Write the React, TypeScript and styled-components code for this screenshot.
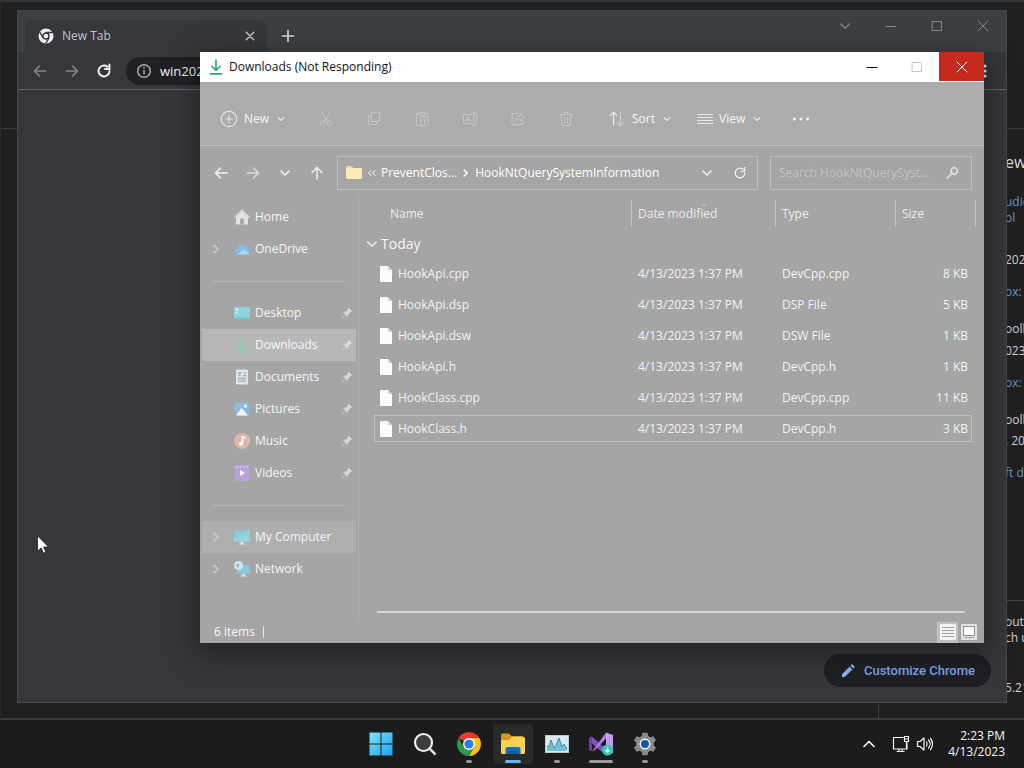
import React from "react";
import styled, { createGlobalStyle } from "styled-components";

const GlobalStyle = createGlobalStyle`
  * { box-sizing: border-box; }
  html, body { margin: 0; padding: 0; }
  body { background: #1f1f1f; font: 12px/16px "Open Sans", "Noto Sans", sans-serif; color: #f6f6f6; }
  button { background: none; border: 0; padding: 0; margin: 0; color: inherit; font: inherit; }
  input { font: inherit; color: inherit; background: none; border: 0; padding: 0; outline: none; min-width: 0; }
  a { color: inherit; text-decoration: none; }
  svg { display: block; flex: none; }
`;

/* ---------- icons ---------- */

const Stroke = styled.svg<{ $w?: number }>`
  fill: none;
  stroke: currentColor;
  stroke-width: ${(p) => p.$w ?? 1};
  stroke-linecap: round;
  stroke-linejoin: round;
`;

type LineProps = { d: string; size?: number; box?: number; weight?: number };
const Line = ({ d, size = 16, box = 16, weight = 1 }: LineProps) => (
  <Stroke width={size} height={size} viewBox={`0 0 ${box} ${box}`} $w={weight} aria-hidden>
    <path d={d} />
  </Stroke>
);

const paths = {
  back: "M14 8H2.5M7.5 3 2.5 8l5 5",
  forward: "M2 8h11.5M8.500 3l5 5-5 5",
  up: "M8 14V2.500M3 7.500l5-5 5 5",
  down: "M4 6l4 4 4-4",
  right: "M6 4l4 4-4 4",
  close: "M3 3l10 10M13 3 3 13",
  plus: "M8 2.500v11M2.500 8h11",
  min: "M3 8.500h10",
  max: "M3.500 3.500h9v9h-9z",
  cut: "M4 1l5.500 9.500M12 1 6.500 10.500M4.500 10a2.200 2.200 0 1 0 .01 0M11.500 10a2.200 2.200 0 1 0 .01 0",
  copy: "M5.500 1.500h8v9h-8zM5.500 5h-3v8.500h8v-3",
  paste: "M5 2.500H2.500v12H6M11 2.500h2.500V5M5 1.500h6v2.500H5zM7 6h7v9H7zM9 9h3M10.500 9v4",
  rename: "M10 3.500H1.500v9H10M14 3.500h1v9h-1M12 1.500v13M10.500 1.500h3M10.500 14.500h3M3.500 10.500l2.200-5 2.200 5M4.200 9h3",
  share: "M8 2.500H2v11h11V10M10 2l4.500 4L10 10V7.800C7.500 7.800 6 9 5 11c0-4 2-6.500 5-6.700z",
  trash: "M1.500 3.500h13M6 3.500v-2h4v2M3 3.500l1 11h8l1-11M6.500 6.500v5.500M9.500 6.500v5.500",
  lines: "M0 3.500h16M0 6.500h16M0 9.500h16M0 12.500h16",
  refresh: "M13.500 8A5.500 5.500 0 1 1 11.500 3.700M13.500 1.500V6H9",
};

const DownloadIcon = ({ color }: { color: string }) => (
  <svg width="16" height="16" viewBox="0 0 16 16" fill="none" stroke={color} strokeWidth="1.700">
    <path d="M8 .5v10.500M3.500 7 8 11.300 12.500 7M2 14.800h12" />
  </svg>
);

const SortIcon = () => (
  <Stroke width="18" height="18" viewBox="0 0 16 16" $w={1.1} aria-hidden>
    <path d="M5 13.500V2M2 5l3-3 3 3" />
    <path d="M11 2.500V14M8 11l3 3 3-3" stroke="#c9dadc" />
  </Stroke>
);

const FolderIcon = () => (
  <svg width="18" height="16" viewBox="0 0 18 16">
    <path d="M1 2.500C1 1.700 1.500 1 2.300 1h4l2 2h7.500c.8 0 1.200.6 1.200 1.300V12H1z" fill="#ead9a4" />
    <rect x="1" y="3" width="16" height="11" rx="1.500" fill="#fdeab8" />
  </svg>
);

const FileIcon = () => (
  <svg width="12" height="16" viewBox="0 0 12 16">
    <path d="M0 0h8l4 4v12H0z" fill="#fbfbfb" />
    <path d="M8 0v4h4z" fill="#d2d2d2" />
  </svg>
);

const PinIcon = () => (
  <svg width="12" height="12" viewBox="0 0 12 12" fill="#d4d7da">
    <path d="M7.500.5 11.500 4.500 9.500 5 7.500 7.200 7 10 4.700 7.700 1 11.500.5 11 4.300 7.300 2 5l2.800-.5L7 2.500z" />
  </svg>
);

type PlaceKind = "home" | "cloud" | "desktop" | "download" | "document" | "picture" | "music" | "video" | "computer" | "network";

const PlaceIcon = ({ kind }: { kind: PlaceKind }) => (
  <svg width="16" height="16" viewBox="0 0 16 16" aria-hidden>
    {kind === "home" && (
      <>
        <path d="M2 7 8 1.500 14 7v8.500H2z" fill="#e2e2e4" />
        <path d="M0 8 8 0l8 8-1.200 1.200L8 3 1.200 9.200z" fill="#e5cfb4" />
        <path d="M6.200 9.500h3.600v6H6.200z" fill="#a5a5a5" />
      </>
    )}
    {kind === "cloud" && (
      <>
        <path d="M3.500 13.500a3.500 3.500 0 0 1-.3-6.800A4.600 4.600 0 0 1 11.700 6a3.900 3.900 0 0 1 .8 7.500z" fill="#84bbe8" />
        <path d="M3.500 13.500 9 8.500l6.500 3.500a3.500 3.500 0 0 1-3 1.500z" fill="#a9d6f3" />
      </>
    )}
    {kind === "desktop" && (
      <>
        <rect y="2" width="16" height="12" rx="1" fill="#8fd3df" />
        <path d="M2 4.500h2M2 7.500h1" stroke="#fff" strokeWidth="1.500" />
        <path d="M0 12h16v1a1 1 0 0 1-1 1H1a1 1 0 0 1-1-1z" fill="#7cc6d6" />
      </>
    )}
    {kind === "download" && (
      <path d="M8 1v10M3.500 7 8 11.200 12.500 7M2 14.500h12" fill="none" stroke="#7fd3ae" strokeWidth="1.800" />
    )}
    {kind === "document" && (
      <>
        <rect x="2" y=".5" width="12" height="15" rx="1" fill="#dfe5ea" />
        <path d="M4 4h4M4 6.500h3M10 4h2M9 6.500h3M4 9.500h8M4 12h8" stroke="#9fb2c2" strokeWidth="1.300" />
      </>
    )}
    {kind === "picture" && (
      <>
        <rect x="1" y="1.500" width="14" height="13" rx="1" fill="#88bce0" />
        <path d="M2 14.500 7.500 7l6.500 7.500z" fill="#f4f8fb" />
        <circle cx="11.500" cy="5" r="1.500" fill="#f4f8fb" />
      </>
    )}
    {kind === "music" && (
      <>
        <circle cx="8" cy="8" r="8" fill="#ddb7aa" />
        <path d="M8.500 3v7.500M8.500 3.500l3 1.500" stroke="#fff" strokeWidth="1.500" />
        <circle cx="7" cy="10.800" r="2" fill="#fff" />
      </>
    )}
    {kind === "video" && (
      <>
        <rect x="1" width="14" height="16" rx="1" fill="#b9a2da" />
        <path d="M2 2h12" stroke="#d8caeb" strokeWidth="1.500" strokeDasharray="2 1.500" />
        <path d="M6 5l5 3-5 3z" fill="#fff" />
      </>
    )}
    {kind === "computer" && (
      <>
        <rect y="1.500" width="16" height="11" rx="1" fill="#85cdd0" />
        <path d="M0 10 14 1.500h1a1 1 0 0 1 1 1v9a1 1 0 0 1-1 1H1a1 1 0 0 1-1-1z" fill="#92d4d9" />
        <path d="M7 12.500h2v2h2v1H5v-1h2z" fill="#dce9ec" />
      </>
    )}
    {kind === "network" && (
      <>
        <rect x="3" y="4" width="13" height="8.500" rx="1" fill="#8bc8e0" />
        <circle cx="4.500" cy="4.500" r="4.500" fill="#d3e6ec" />
        <path d="M1.500 3.500 4 2.500l1.500 2L4 7z" fill="#8bbdcc" />
        <path d="M8.500 12.500h2v2h2v1h-6v-1h2z" fill="#dce9ec" />
      </>
    )}
  </svg>
);

/* ---------- desktop ---------- */

const Desktop = styled.div`
  position: relative;
  display: flex;
  flex-direction: column;
  height: 100vh;
  min-height: 700px;
  overflow: hidden;
`;

const EditorWindow = styled.div`
  flex: 1;
  min-height: 0;
  display: flex;
  flex-direction: column;
  background: #202021;
  border-top: 2px solid #353535;
  border-bottom: 2px solid #3a3a3f;
  border-left: 1px solid #2b2b2b;
`;

const EditorHeader = styled.div`
  height: 127px;
  flex: none;
  border-bottom: 1px solid #3b3b3b;
  margin-left: 1px;
`;

const EditorBody = styled.div`
  flex: 1;
  min-height: 0;
  display: flex;
  justify-content: flex-end;
`;

const NewsPanel = styled.aside`
  width: 146px;
  border-left: 1px solid #3d3d3d;
  padding-left: 126px;
  overflow: hidden;
  white-space: nowrap;
  display: flex;
  flex-direction: column;
`;

const NewsTitle = styled.h2`
  margin: 21px 0 20px;
  font-size: 16px;
  line-height: 24px;
  font-weight: 400;
  color: #dcdcdc;
`;

const NewsLink = styled.a`
  display: block;
  color: #649ac2;
`;

const NewsItem = styled.div<{ $before: number }>`
  margin-top: ${(p) => p.$before}px;
`;

const NewsText = styled.div`
  color: #d0d0d0;
`;

const NewsFooter = styled.div`
  margin: 119px 0 0 -126px;
  padding: 13px 0 0 126px;
  border-top: 1px solid #444;
`;

/* ---------- browser window ---------- */

const BrowserWindow = styled.section`
  position: absolute;
  inset: 10px 17px 65px 17px;
  display: flex;
  flex-direction: column;
  background: #36373b;
  border: 1px solid #46484b;
  border-top-color: #404346;
`;

const TabStrip = styled.div`
  display: flex;
  height: 41px;
  padding-left: 7px;
  background: #3c4043;
`;

const Tab = styled.div`
  display: flex;
  align-items: center;
  width: 242px;
  height: 32px;
  margin-top: 9px;
  padding: 0 11px 0 13px;
  gap: 8px;
  border-radius: 8px 8px 0 0;
  background: #36373b;
  color: #c3c5c7;
`;

const TabLabel = styled.span`
  flex: 1;
`;

const NewTabButton = styled.button`
  margin: 9px 0 0 13px;
  color: #d4d6d8;
`;

const CaptionButtons = styled.div<{ $tone: string; $w: number }>`
  display: grid;
  grid-auto-flow: column;
  grid-auto-columns: ${(p) => p.$w}px;
  margin-left: auto;
  color: ${(p) => p.$tone};
`;

const CaptionButton = styled.button<{ $danger?: boolean; $faint?: boolean }>`
  display: grid;
  place-items: center;
  height: 29px;
  background: ${(p) => (p.$danger ? "#c42b1c" : "transparent")};
  color: ${(p) => (p.$danger ? "#fff" : p.$faint ? "#c4c4c4" : "inherit")};
`;

const BrowserToolbar = styled.div`
  display: flex;
  align-items: center;
  height: 38px;
  padding: 0 19px 0 14px;
  gap: 16px;
  border-bottom: 1px solid #626467;
`;

const ToolButton = styled.button<{ $dim?: boolean }>`
  color: ${(p) => (p.$dim ? "#85878a" : "#f2f3f4")};
`;

const Omnibox = styled.label`
  display: flex;
  align-items: center;
  flex: 1;
  height: 28px;
  margin: 0 20px 0 -2px;
  padding: 0 10px;
  gap: 8px;
  border-radius: 14px;
  background: #202124;
  color: #a6a8ab;
  input { flex: 1; color: #f1f2f3; font-size: 13px; }
`;

const BrowserPage = styled.div`
  flex: 1;
  min-height: 0;
  display: flex;
  justify-content: flex-end;
  align-items: flex-end;
  padding: 15px;
`;

const CustomizeButton = styled.button`
  display: flex;
  align-items: center;
  gap: 8px;
  height: 33px;
  padding: 0 16px;
  border-radius: 17px;
  background: #1e2023;
  color: #7ea3ea;
  font: 500 13px/16px Roboto, sans-serif;
`;

/* ---------- file explorer window ---------- */

const ExplorerWindow = styled.section`
  position: absolute;
  inset: 52px 40px 125px 200px;
  display: flex;
  flex-direction: column;
  background: #a5a5a5;
  box-shadow: 0 8px 28px 4px rgba(0, 0, 0, 0.36);
`;

const ExplorerTitle = styled.header`
  display: flex;
  height: 30px;
  flex: none;
  background: #fff;
  color: #111;
`;

const ExplorerCaption = styled.div`
  display: flex;
  align-items: center;
  gap: 5px;
  padding-left: 8px;
`;

const CommandBar = styled.div`
  display: flex;
  align-items: center;
  height: 64px;
  flex: none;
  padding: 10px 20px 0;
  gap: 18px;
  background: #acacac;
  border-bottom: 1px solid #bcbcbc;
`;

const CommandButton = styled.button<{ $w: number }>`
  display: flex;
  align-items: center;
  width: ${(p) => p.$w}px;
  gap: 6px;
  font-weight: 500;
  svg { opacity: 0.8; }
`;

const CommandGroup = styled.div`
  display: flex;
  color: #c3c6c6;
`;

const CommandIconButton = styled.button`
  display: grid;
  place-items: center;
  width: 48px;
  height: 32px;
`;

const NavBar = styled.div`
  display: flex;
  height: 50px;
  flex: none;
  padding: 10px 12px 6px 5px;
`;

const NavButton = styled.button<{ $dim?: boolean }>`
  display: grid;
  place-items: center;
  width: 32px;
  opacity: ${(p) => (p.$dim ? 0.65 : 1)};
`;

const AddressBox = styled.div`
  display: flex;
  align-items: center;
  flex: 1;
  min-width: 0;
  margin: 0 12px 0 4px;
  padding: 0 10px 0 7px;
  border: 1px solid #bdbdbd;
  white-space: nowrap;
`;

const Crumb = styled.button`
  font-weight: 400;
  color: #fff;
`;

const AddressTools = styled.div`
  display: flex;
  align-items: center;
  gap: 18px;
  margin-left: auto;
`;

const SearchBox = styled.label`
  display: flex;
  align-items: center;
  width: 202px;
  padding: 0 12px 0 8px;
  gap: 14px;
  border: 1px solid #bdbdbd;
  color: #e0e0e0;
  input { flex: 1; text-overflow: ellipsis; }
  input::placeholder { color: #c3c3c3; opacity: 1; }
`;

const ExplorerBody = styled.div`
  flex: 1;
  min-height: 0;
  display: flex;
`;

const Sidebar = styled.nav`
  width: 159px;
  flex: none;
  padding: 5px 2px 0;
  border-right: 1px solid #b1b1b1;
`;

const PlaceRow = styled.a<{ $bg?: string }>`
  display: flex;
  align-items: center;
  height: 32px;
  width: 154px;
  padding-right: 3px;
  background: ${(p) => p.$bg ?? "transparent"};
`;

const Expander = styled.span`
  display: grid;
  place-items: center;
  width: 28px;
  margin-right: 4px;
  color: #d0d0d0;
`;

const PlaceLabel = styled.span`
  flex: 1;
  margin-left: 5px;
  white-space: nowrap;
`;

const Separator = styled.hr`
  height: 1px;
  margin: 16px 11px 15px;
  border: 0;
  background: #b6b6b6;
`;

const FilePane = styled.main`
  flex: 1;
  min-width: 0;
  display: flex;
  flex-direction: column;
  padding: 0 8px 8px 15px;
`;

const FileTable = styled.table`
  width: 100%;
  table-layout: fixed;
  border-collapse: separate;
  border-spacing: 0 4px;
  th, td { padding: 0; text-align: left; font-weight: 400; white-space: nowrap; }
`;

const Col = styled.col<{ $w?: number }>`
  width: ${(p) => (p.$w ? p.$w + "px" : "auto")};
`;

const HeadCell = styled.th<{ $first?: boolean }>`
  position: relative;
  height: 27px;
  border-left: 1px solid ${(p) => (p.$first ? "transparent" : "#c4c4c4")};
  && { padding-left: ${(p) => (p.$first ? 15 : 6)}px; color: #ececec; }
`;

const SortMark = styled.span`
  position: absolute;
  top: 0;
  left: calc(50% - 5px);
  color: #cfcfcf;
`;

const HeadEnd = styled.td`
  border-right: 1px solid #c4c4c4;
`;

const GroupCell = styled.th`
  height: 25px;
`;

const GroupToggle = styled.button`
  display: flex;
  align-items: center;
  gap: 0;
  margin-left: -11px;
  padding-top: 1px;
  font-size: 14px;
`;

const FileRow = styled.tr<{ $selected?: boolean }>`
  td {
    height: 27px;
    border: 0 solid ${(p) => (p.$selected ? "#c0c0c0" : "transparent")};
    border-width: 1px 0;
    padding-left: 7px;
    color: #f2f2f2;
  }
  td:first-child { border-left-width: 1px; padding-left: 5px; }
  td:nth-child(4) { border-right-width: 1px; padding: 0 3px 0 0; text-align: right; }
  td:last-child { border: 0; padding: 0; }
`;

const FileName = styled.span`
  display: flex;
  align-items: center;
  gap: 6px;
`;

const PaneRule = styled.div`
  height: 2px;
  margin: auto 11px 0 3px;
  background: #d6d6d6;
`;

const StatusBar = styled.footer`
  display: flex;
  align-items: center;
  height: 22px;
  flex: none;
  padding: 0 5px 0 14px;
  gap: 8px;
`;

const StatusDivider = styled.span`
  width: 1px;
  height: 12px;
  background: #e6e6e6;
`;

const ViewSwitch = styled.div`
  display: flex;
  margin-left: auto;
`;

const ViewButton = styled.button<{ $active?: boolean }>`
  display: grid;
  place-items: center;
  width: 21px;
  height: 21px;
  background: ${(p) => (p.$active ? "#c0c0c0" : "transparent")};
`;

/* ---------- taskbar ---------- */

const Taskbar = styled.footer`
  display: grid;
  grid-template-columns: 1fr auto 1fr;
  align-items: center;
  height: 48px;
  flex: none;
  padding-left: 2px;
  background: #1c1c1c;
`;

const AppRow = styled.div`
  grid-column: 2;
  display: flex;
  gap: 4px;
`;

const AppButton = styled.button<{ $active?: boolean }>`
  display: flex;
  flex-direction: column;
  align-items: center;
  width: 40px;
  height: 40px;
  padding-top: 8px;
  border-radius: 4px;
  background: ${(p) => (p.$active ? "#2a2a2a" : "transparent")};
`;

const RunMark = styled.span<{ $w: number; $color: string }>`
  width: ${(p) => p.$w}px;
  height: 3px;
  margin-top: 4px;
  border-radius: 2px;
  background: ${(p) => p.$color};
`;

const Tray = styled.div`
  display: flex;
  align-items: center;
  justify-content: flex-end;
  padding-right: 19px;
  gap: 6px;
`;

const TrayButton = styled.button`
  &:first-child { margin-right: 9px; }
`;

const Clock = styled.button`
  margin-left: 8px;
  text-align: right;
  white-space: nowrap;
`;

const Pointer = styled.svg`
  position: absolute;
  left: 37px;
  top: 535px;
`;

/* ---------- data ---------- */

type Place = { kind: PlaceKind; label: string; open?: boolean; pin?: boolean; bg?: string };

const quickPlaces: Place[] = [
  { kind: "home", label: "Home" },
  { kind: "cloud", label: "OneDrive", open: true },
];
const pinnedPlaces: Place[] = [
  { kind: "desktop", label: "Desktop", pin: true },
  { kind: "download", label: "Downloads", pin: true, bg: "#b7b7b7" },
  { kind: "document", label: "Documents", pin: true },
  { kind: "picture", label: "Pictures", pin: true },
  { kind: "music", label: "Music", pin: true },
  { kind: "video", label: "Videos", pin: true },
];
const devicePlaces: Place[] = [
  { kind: "computer", label: "My Computer", open: true, bg: "#aeaeae" },
  { kind: "network", label: "Network", open: true },
];

const files = [
  ["HookApi.cpp", "DevCpp.cpp", "8 KB"],
  ["HookApi.dsp", "DSP File", "5 KB"],
  ["HookApi.dsw", "DSW File", "1 KB"],
  ["HookApi.h", "DevCpp.h", "1 KB"],
  ["HookClass.cpp", "DevCpp.cpp", "11 KB"],
  ["HookClass.h", "DevCpp.h", "3 KB"],
];

const disabledCommands: [string, string][] = [
  ["Cut", paths.cut],
  ["Copy", paths.copy],
  ["Paste", paths.paste],
  ["Rename", paths.rename],
  ["Share", paths.share],
  ["Delete", paths.trash],
];

const Places = ({ items }: { items: Place[] }) => (
  <>
    {items.map((p) => (
      <PlaceRow key={p.label} href="#" $bg={p.bg}>
        <Expander>{p.open && <Line d={paths.right} weight={1.3} />}</Expander>
        <PlaceIcon kind={p.kind} />
        <PlaceLabel>{p.label}</PlaceLabel>
        {p.pin && <PinIcon />}
      </PlaceRow>
    ))}
  </>
);

/* ---------- sections ---------- */

const Editor = () => (
  <EditorWindow>
    <EditorHeader />
    <EditorBody>
      <NewsPanel>
        <NewsTitle>ew</NewsTitle>
        <NewsLink href="#">udio</NewsLink>
        <NewsLink href="#">ol</NewsLink>
        <NewsItem $before={26}>
          <NewsText>2023</NewsText>
        </NewsItem>
        <NewsItem $before={16}>
          <NewsLink href="#">ox: I</NewsLink>
        </NewsItem>
        <NewsItem $before={21}>
          <NewsText>oolb</NewsText>
        </NewsItem>
        <NewsItem $before={6}>
          <NewsText>023</NewsText>
        </NewsItem>
        <NewsItem $before={16}>
          <NewsLink href="#">ox: I</NewsLink>
        </NewsItem>
        <NewsItem $before={21}>
          <NewsText>oolb</NewsText>
        </NewsItem>
        <NewsItem $before={5}>
          <NewsText>, 20</NewsText>
        </NewsItem>
        <NewsItem $before={16}>
          <NewsLink href="#">ft d</NewsLink>
        </NewsItem>
        <NewsFooter>
          <NewsText>out</NewsText>
          <NewsText>ch u</NewsText>
          <NewsItem $before={34}>
            <NewsText>5.21</NewsText>
          </NewsItem>
        </NewsFooter>
      </NewsPanel>
    </EditorBody>
  </EditorWindow>
);

const Browser = () => (
  <BrowserWindow>
    <TabStrip>
      <Tab>
        <svg width="16" height="16" viewBox="0 0 16 16">
          <circle cx="8" cy="8" r="7.500" fill="#f1f1f1" />
          <circle cx="8" cy="8" r="3" fill="none" stroke="#35363a" strokeWidth="1.400" />
          <path d="M8 4.500h6.800M5 9.700 1.600 3.900M11 9.800l-3.300 5.700" stroke="#35363a" strokeWidth="1.300" />
        </svg>
        <TabLabel>New Tab</TabLabel>
        <button aria-label="Close tab">
          <Line d={paths.close} size={12} weight={1.9} />
        </button>
      </Tab>
      <NewTabButton aria-label="New tab">
        <Line d={paths.plus} size={16} weight={1.7} />
      </NewTabButton>
      <CaptionButtons $tone="#85888a" $w={46}>
        <CaptionButton aria-label="Search tabs"><Line d={paths.down} size={18} /></CaptionButton>
        <CaptionButton aria-label="Minimize"><Line d={paths.min} /></CaptionButton>
        <CaptionButton aria-label="Maximize"><Line d={paths.max} /></CaptionButton>
        <CaptionButton aria-label="Close"><Line d={paths.close} /></CaptionButton>
      </CaptionButtons>
    </TabStrip>
    <BrowserToolbar>
      <ToolButton $dim aria-label="Back"><Line d={paths.back} weight={1.6} /></ToolButton>
      <ToolButton $dim aria-label="Forward"><Line d={paths.forward} weight={1.6} /></ToolButton>
      <ToolButton aria-label="Reload"><Line d={paths.refresh} weight={1.9} /></ToolButton>
      <Omnibox>
        <svg width="16" height="16" viewBox="0 0 16 16" fill="none" stroke="currentColor" strokeWidth="1.500">
          <circle cx="8" cy="8" r="6.300" />
          <path d="M8 7v4.500M8 4v1.600" />
        </svg>
        <input defaultValue="win2022" aria-label="Address" />
      </Omnibox>
      <ToolButton aria-label="Menu">
        <svg width="4" height="16" viewBox="0 0 4 16" fill="currentColor">
          <circle cx="2" cy="3" r="1.600" />
          <circle cx="2" cy="8" r="1.600" />
          <circle cx="2" cy="13" r="1.600" />
        </svg>
      </ToolButton>
    </BrowserToolbar>
    <BrowserPage>
      <CustomizeButton>
        <svg width="16" height="16" viewBox="0 0 16 16" fill="#86b6ec">
          <path d="M2 14v-2.800l7.600-7.600 2.800 2.800L4.800 14zM10.400 2.800l1.200-1.200a.8.8 0 0 1 1.100 0l1.700 1.700a.8.8 0 0 1 0 1.100l-1.200 1.200z" />
        </svg>
        Customize Chrome
      </CustomizeButton>
    </BrowserPage>
  </BrowserWindow>
);

const Explorer = () => (
  <ExplorerWindow>
    <ExplorerTitle>
      <ExplorerCaption>
        <DownloadIcon color="#27a783" />
        Downloads (Not Responding)
      </ExplorerCaption>
      <CaptionButtons $tone="#000" $w={45}>
        <CaptionButton aria-label="Minimize"><Line d={paths.min} /></CaptionButton>
        <CaptionButton $faint aria-label="Maximize"><Line d={paths.max} /></CaptionButton>
        <CaptionButton $danger aria-label="Close"><Line d={paths.close} /></CaptionButton>
      </CaptionButtons>
    </ExplorerTitle>
    <CommandBar>
      <CommandButton $w={64}>
        <Line d="M8 1.200a6.800 6.800 0 1 0 .01 0M8 5v6M5 8h6" size={18} />
        New
        <Line d={paths.down} size={12} weight={1.5} />
      </CommandButton>
      <CommandGroup>
        {disabledCommands.map(([name, d]) => (
          <CommandIconButton key={name} disabled aria-label={name}>
            <Line d={d} />
          </CommandIconButton>
        ))}
      </CommandGroup>
      <CommandButton $w={71}>
        <SortIcon />
        Sort
        <Line d={paths.down} size={12} weight={1.5} />
      </CommandButton>
      <CommandButton $w={78}>
        <Line d={paths.lines} />
        View
        <Line d={paths.down} size={12} weight={1.5} />
      </CommandButton>
      <button aria-label="More">
        <svg width="16" height="16" viewBox="0 0 16 16" fill="currentColor">
          <circle cx="1.500" cy="8" r="1.500" />
          <circle cx="8" cy="8" r="1.500" />
          <circle cx="14.500" cy="8" r="1.500" />
        </svg>
      </button>
    </CommandBar>
    <NavBar>
      <NavButton aria-label="Back"><Line d={paths.back} weight={1.6} /></NavButton>
      <NavButton $dim aria-label="Forward"><Line d={paths.forward} weight={1.6} /></NavButton>
      <NavButton aria-label="Recent"><Line d={paths.down} weight={1.6} /></NavButton>
      <NavButton aria-label="Up"><Line d={paths.up} weight={1.4} /></NavButton>
      <AddressBox>
        <FolderIcon />
        <Stroke width="18" height="12" viewBox="0 0 18 12" $w={1}>
          <path d="M8 3.500 5.500 6 8 8.500M12 3.500 9.500 6l2.500 2.500" />
        </Stroke>
        <Crumb>PreventClos...</Crumb>
        <Line d="M6.500 5.500 9 8l-2.500 2.500" size={18} weight={1.5} />
        <Crumb>HookNtQuerySystemInformation</Crumb>
        <AddressTools>
          <button aria-label="Address history"><Line d={paths.down} weight={1.3} /></button>
          <button aria-label="Refresh"><Line d={paths.refresh} size={14} weight={1.4} /></button>
        </AddressTools>
      </AddressBox>
      <SearchBox>
        <input placeholder="Search HookNtQuerySystemInformation" aria-label="Search" />
        <Line d="M10.500 2a3.600 3.600 0 1 0 .01 0M7.800 8.500 2.500 14" size={14} weight={1.9} />
      </SearchBox>
    </NavBar>
    <ExplorerBody>
      <Sidebar>
        <Places items={quickPlaces} />
        <Separator />
        <Places items={pinnedPlaces} />
        <Separator />
        <Places items={devicePlaces} />
      </Sidebar>
      <FilePane>
        <FileTable>
          <colgroup>
            <Col />
            <Col $w={144} />
            <Col $w={120} />
            <Col $w={77} />
            <Col $w={4} />
          </colgroup>
          <thead>
            <tr>
              <HeadCell $first>Name</HeadCell>
              <HeadCell>
                Date modified
                <SortMark>
                  <Line d={paths.down} size={10} weight={1.4} />
                </SortMark>
              </HeadCell>
              <HeadCell>Type</HeadCell>
              <HeadCell>Size</HeadCell>
              <HeadEnd />
            </tr>
          </thead>
          <tbody>
            <tr>
              <GroupCell colSpan={5}>
                <GroupToggle>
                  <Line d={paths.down} size={18} />
                  Today
                </GroupToggle>
              </GroupCell>
            </tr>
            {files.map(([name, type, size]) => (
              <FileRow key={name} $selected={name === "HookClass.h"}>
                <td>
                  <FileName>
                    <FileIcon />
                    {name}
                  </FileName>
                </td>
                <td>4/13/2023 1:37 PM</td>
                <td>{type}</td>
                <td>{size}</td>
                <td />
              </FileRow>
            ))}
          </tbody>
        </FileTable>
        <PaneRule />
      </FilePane>
    </ExplorerBody>
    <StatusBar>
      6 items
      <StatusDivider />
      <ViewSwitch>
        <ViewButton $active aria-label="Details view">
          <svg width="16" height="16" viewBox="0 0 16 16" fill="none">
            <rect width="16" height="16" rx="1" fill="#f1f1f1" />
            <path d="M2 3.500h12M2 6.500h12M2 9.500h12M2 12.500h12" stroke="#a0a0a0" />
          </svg>
        </ViewButton>
        <ViewButton aria-label="Thumbnail view">
          <svg width="16" height="16" viewBox="0 0 16 16">
            <rect width="16" height="16" rx="1.500" fill="#e3e3e3" />
            <rect x="2.500" y="2.500" width="11" height="9" fill="#fff" stroke="#8f8f8f" />
            <path d="M3 13.500h10" stroke="#a5a5a5" />
          </svg>
        </ViewButton>
      </ViewSwitch>
    </StatusBar>
  </ExplorerWindow>
);

const grey = "#9a9a9a";

const Bar = () => (
  <Taskbar>
    <AppRow>
      <AppButton aria-label="Start">
        <svg width="24" height="24" viewBox="0 0 24 24">
          <defs>
            <linearGradient id="win" x1="0" y1="0" x2="1" y2="1">
              <stop offset="0" stopColor="#7de3fb" />
              <stop offset="1" stopColor="#1fa0ec" />
            </linearGradient>
          </defs>
          <path d="M.5.5h11v11H.5zM12.500.5h11v11h-11zM.5 12.500h11v11H.5zM12.500 12.500h11v11h-11z" fill="url(#win)" />
        </svg>
      </AppButton>
      <AppButton aria-label="Search">
        <svg width="24" height="24" viewBox="0 0 24 24">
          <circle cx="10.500" cy="10.500" r="8.500" fill="#3c3c3e" stroke="#f0f0f0" strokeWidth="2.200" />
          <path d="M17 17l5.500 5.500" stroke="#d8d8d8" strokeWidth="2.600" />
        </svg>
      </AppButton>
      <AppButton aria-label="Chrome">
        <svg width="24" height="24" viewBox="0 0 24 24">
          <path d="M12 12 1.610 6A12 12 0 0 1 22.390 6z" fill="#e33b2e" />
          <path d="M12 6h10.390A12 12 0 0 1 12 24l5.200-9z" fill="#fbc116" />
          <path d="M1.610 6 6.800 15 12 18l5.200-3L12 24A12 12 0 0 1 1.610 6z" fill="#2b9c48" />
          <circle cx="12" cy="12" r="6" fill="#fff" />
          <circle cx="12" cy="12" r="4.600" fill="#2f7de1" />
        </svg>
        <RunMark $w={6} $color={grey} />
      </AppButton>
      <AppButton $active aria-label="File Explorer">
        <svg width="24" height="24" viewBox="0 0 24 24">
          <path d="M0 3a1.500 1.500 0 0 1 1.500-1.500H8L10.500 4H22v6H0z" fill="#d99a1c" />
          <path d="M0 8h8.500L11 5h11.500A1.500 1.500 0 0 1 24 6.500v14a1.500 1.500 0 0 1-1.500 1.500h-21A1.500 1.500 0 0 1 0 20.500z" fill="#fbd350" />
          <path d="M4.500 22v-5a2 2 0 0 1 2-2h11a2 2 0 0 1 2 2v5z" fill="#1471b8" />
          <path d="M7 19h10v3H7z" fill="#0d5c9e" />
        </svg>
        <RunMark $w={16} $color="#5db8ee" />
      </AppButton>
      <AppButton aria-label="Monitor">
        <svg width="24" height="24" viewBox="0 0 24 24">
          <rect y="3" width="24" height="18" fill="#dce9ef" />
          <path d="M2 19V14l2 1 2-7 3 8 2-3 3-7 3 9 2-3 3 5v2z" fill="#74bfd8" />
          <path d="M2 14l2 1 2-7 3 8 2-3 3-7 3 9 2-3 3 5" fill="none" stroke="#3490b4" />
          <rect x=".5" y="3.500" width="23" height="17" fill="none" stroke="#b7c9d1" />
        </svg>
        <RunMark $w={6} $color={grey} />
      </AppButton>
      <AppButton aria-label="Visual Studio">
        <svg width="24" height="24" viewBox="0 0 24 24">
          <path d="M0 6l3-1.500L19 19l-2 4.500L0 9z" fill="#8052bd" />
          <path d="M0 18V6l3-1.500V19z" fill="#6b3fa8" />
          <path d="M3 19.500 17 .5l2 4L6 18z" fill="#a879e3" />
          <path d="M17 .5 24 3v18l-7 2.500z" fill="#c29bf0" />
          <circle cx="18.500" cy="18" r="5.500" fill="#35c7b1" />
          <path d="M18.500 15v5M16.300 18l2.200 2.300 2.200-2.300" fill="none" stroke="#e8fffb" strokeWidth="1.300" />
        </svg>
        <RunMark $w={24} $color={grey} />
      </AppButton>
      <AppButton aria-label="Settings">
        <svg width="24" height="24" viewBox="0 0 24 24">
          <path
            d="M9.500.8h5l.8 3.200 2 1.200 3.200-1 2.500 4.300-2.300 2.300v2.400l2.300 2.300-2.500 4.300-3.200-1-2 1.200-.8 3.200h-5L8.700 20l-2-1.200-3.200 1L1 15.500l2.300-2.300v-2.400L1 8.500l2.500-4.300 3.200 1 2-1.200z"
            fill="#888b8f"
          />
          <circle cx="12" cy="12" r="5.500" fill="#f2f4f6" />
          <circle cx="12" cy="12" r="4" fill="#1559a6" />
        </svg>
        <RunMark $w={6} $color={grey} />
      </AppButton>
    </AppRow>
    <Tray>
      <TrayButton aria-label="Show hidden icons"><Line d="M3 10.500l5-5 5 5" weight={1.7} /></TrayButton>
      <TrayButton aria-label="Network">
        <Stroke width="18" height="18" viewBox="0 0 18 18" $w={1.2}>
          <path d="M11 2.500H1.500v11.500h13.500V8M5 16.500h7M7 14v2.500M10 14v2.500M12.500 1.500h4v5h-4zM14.500 6.500V14M12.500 4h4" />
        </Stroke>
      </TrayButton>
      <TrayButton aria-label="Volume">
        <Stroke width="18" height="18" viewBox="0 0 18 18" $w={1.2}>
          <path d="M1.500 6.500h2.500L8 3v12l-4-3.500H1.500zM10.500 7a3.500 3.500 0 0 1 0 4M12.500 5a6 6 0 0 1 0 8M14.500 3.500a8.500 8.500 0 0 1 0 11" />
        </Stroke>
      </TrayButton>
      <Clock>
        2:23 PM
        <br />
        4/13/2023
      </Clock>
    </Tray>
  </Taskbar>
);

export default function App() {
  return (
    <>
      <GlobalStyle />
      <Desktop>
        <Editor />
        <Bar />
        <Browser />
        <Explorer />
        <Pointer width="12" height="20" viewBox="0 0 12 20">
          <path d="M.5.8v15.500l3.700-3.400 2.300 5.300 2.400-1-2.300-5.200h4.900z" fill="#fff" stroke="#1a1a1a" strokeWidth=".8" />
        </Pointer>
      </Desktop>
    </>
  );
}
